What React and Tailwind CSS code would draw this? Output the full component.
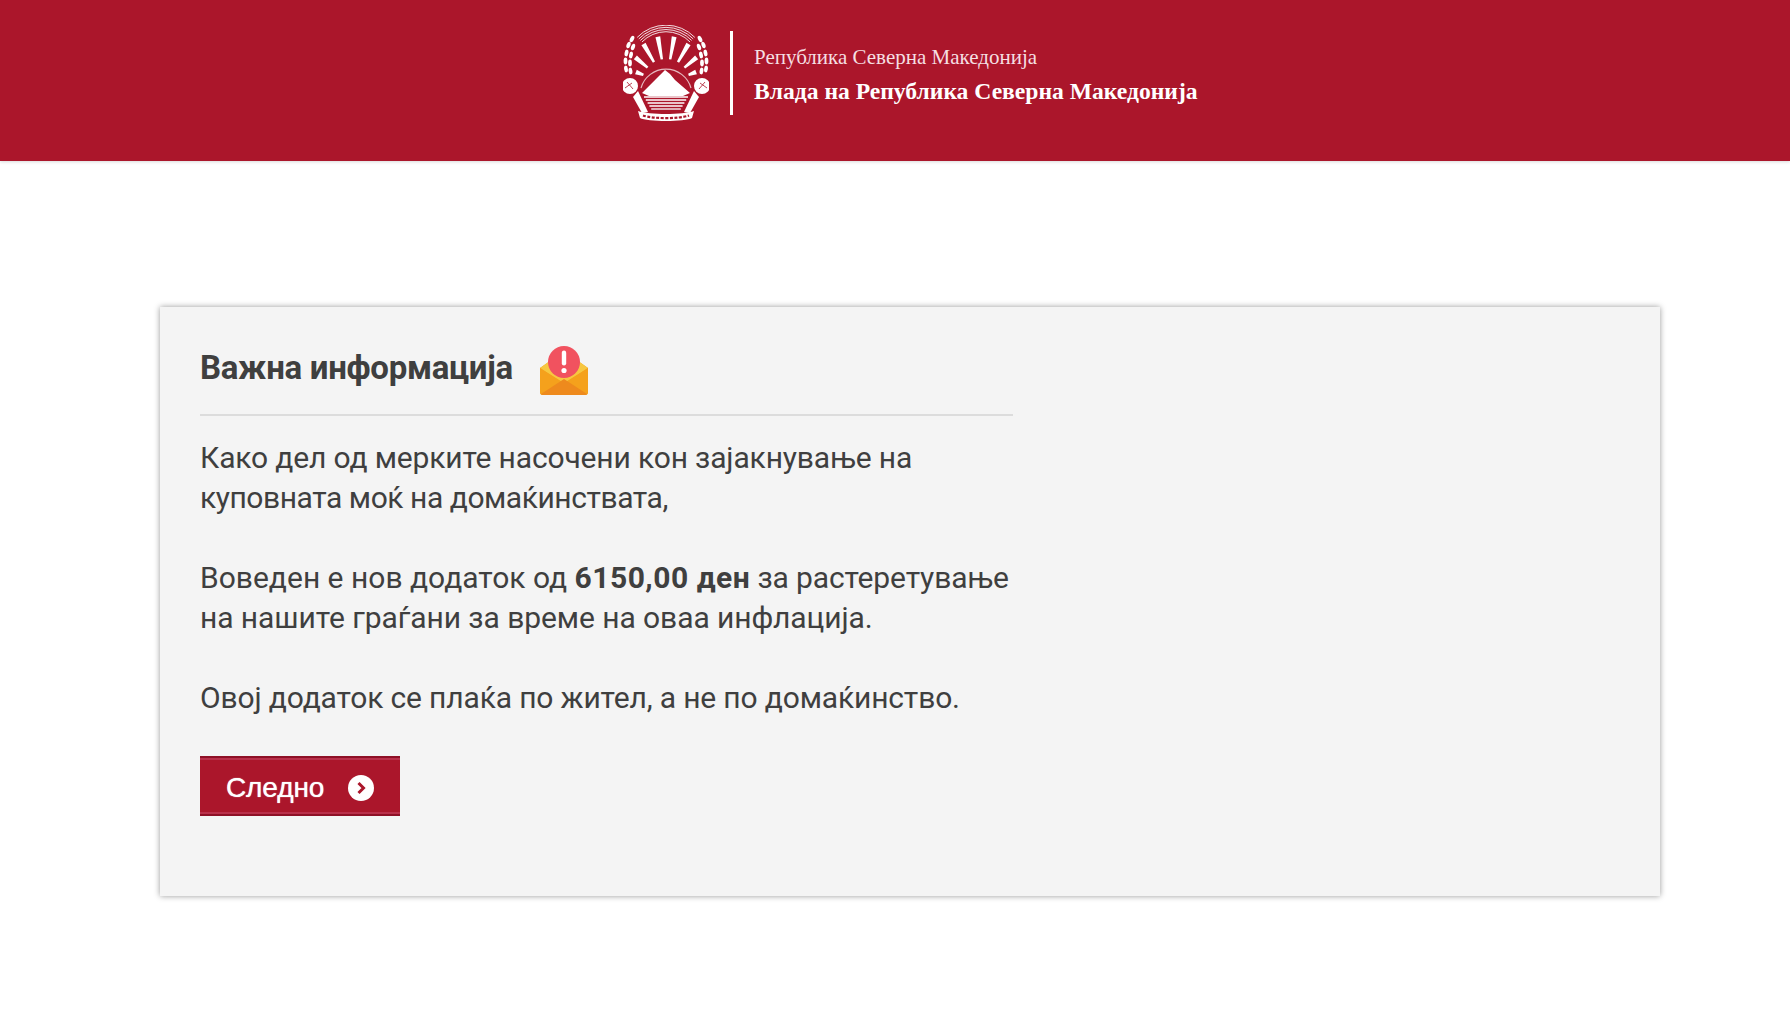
const rays = [
  [-70, 32], [-50, 40], [-30, 45], [-10, 47], [10, 47], [30, 45], [50, 40], [70, 32],
];

function Wheat({ flip }) {
  const grains = [
    [9, 14, 28], [5.5, 20, 20], [10, 22, 20], [3.5, 28, 10], [8, 30, 10], [2.5, 36, 0], [7, 38, 0], [3, 44, -8], [7.5, 46, -8],
  ];
  return (
    <g transform={flip ? "matrix(-1 0 0 1 86 0)" : undefined}>
      {grains.map(([x, y, a]) => (
        <ellipse key={`${x}-${y}`} cx={x} cy={y} rx="1.9" ry="3.4" fill="#fff" transform={`rotate(${a} ${x} ${y})`} />
      ))}
    </g>
  );
}

function Emblem() {
  return (
    <svg width="86" height="97" viewBox="0 0 86 97" fill="none" className="shrink-0 blur-[0.4px]">
      {[40, 37.8, 35.6, 33.4].map((r) => (
        <path key={r} d={`M${43 - r * 0.72} ${40 - r * 0.69} A${r} ${r} 0 0 1 ${43 + r * 0.72} ${40 - r * 0.69}`} stroke="#fff" strokeWidth="1" opacity="0.85" />
      ))}
      {rays.map(([a, R]) => (
        <path key={a} d={`M41.8 34 L40.6 ${58 - R} L45.4 ${58 - R} L44.2 34 Z`} fill="#fff" transform={`rotate(${a} 43 58)`} />
      ))}
      <path d="M18 63 A26 26 0 0 1 68 63" stroke="#fff" strokeWidth="1.2" opacity="0.7" />
      <path d="M19 68 L33 54 L37 50 L42 45 L47 49 L52 55 L67 68 L60 71 L26 71 Z" fill="#fff" />
      {[72, 75, 78, 81, 84].map((y) => (
        <line key={y} x1={21 + (y - 72) * 0.6} y1={y} x2={65 - (y - 72) * 0.6} y2={y} stroke="#fff" strokeWidth="1.3" />
      ))}
      <Wheat />
      <Wheat flip />
      <circle cx="7" cy="61" r="8" fill="#fff" />
      <circle cx="79" cy="61" r="8" fill="#fff" />
      <path d="M4 57 L10 64 M2 63 L9 58" stroke="#ab162b" strokeWidth="0.8" />
      <path d="M82 57 L76 64 M84 63 L77 58" stroke="#ab162b" strokeWidth="0.8" />
      <path d="M15 66 L25 87 L19 88 L10 72 Z" fill="#fff" />
      <path d="M71 66 L61 87 L67 88 L76 72 Z" fill="#fff" />
      <path d="M15 86 C26 90 60 90 71 86 L69 93 C62 97 24 97 17 93 Z" fill="#fff" />
      <path d="M20 90.5 C30 94 56 94 66 90.5" stroke="#ab162b" strokeWidth="2.2" strokeDasharray="3 1.5" />
    </svg>
  );
}

function MailAlert() {
  return (
    <svg width="50" height="50" viewBox="0 0 50 50" className="shrink-0">
      <path d="M1 22 L25 5 L49 22 L49 46 Q49 49 46 49 L4 49 Q1 49 1 46 Z" fill="#f5a11c" />
      <path d="M1 22 L25 5 L49 22 L25 38 Z" fill="#f7c741" />
      <path d="M1 22 L25 37 L49 22 L49 46 Q49 49 46 49 L4 49 Q1 49 1 46 Z" fill="#f5a11c" />
      <path d="M2 48 L25 33 L48 48 Q47 49 46 49 L4 49 Q3 49 2 48 Z" fill="#ee8a1d" />
      <circle cx="25" cy="16" r="16" fill="#f1525f" />
      <rect x="22.8" y="4.5" width="4.4" height="15" rx="2.2" fill="#fff" />
      <circle cx="25" cy="24.5" r="2.6" fill="#fff" />
    </svg>
  );
}

export default function App() {
  const body = "font-['Roboto','Noto_Sans',sans-serif]";
  return (
    <div className="min-h-[1020px] bg-white">
      <header className="flex h-[161px] items-start bg-[#ab162b] pl-[623px] pt-[25px] shadow-[0_1px_3px_rgba(0,0,0,0.15)]">
        <Emblem />
        <div className="ml-[21px] mt-[6px] h-[84px] w-[3px] bg-white" />
        <div className="ml-[21px] mt-[19px] font-['Liberation_Serif',serif] text-white">
          <div className="text-[21px] leading-[26px] text-[#f5dfe2]">Република Северна Македонија</div>
          <div className="mt-[7px] text-[23.6px] font-bold leading-[28px]">Влада на Република Северна Македонија</div>
        </div>
      </header>
      <main className="pl-[160px] pt-[146px]">
        <section className={`h-[589px] w-[1500px] bg-[#f4f4f4] px-[40px] pt-[33px] text-[#3f3f3f] shadow-[0_0_6px_rgba(0,0,0,0.4)] ${body}`}>
          <div className="w-[813px] border-b-2 border-[#dcdcdc]">
            <div className="flex h-[74px] items-start">
              <h1 className="mt-[6px] text-[33px] font-bold leading-[44px] tracking-[-0.3px] text-[#3f3f3f]">Важна информација</h1>
              <div className="ml-[26px] mt-[6px]"><MailAlert /></div>
            </div>
          </div>
          <div className="mt-[22px] w-[830px] text-[30px] leading-[40px] tracking-[-0.15px]">
            <p>Како дел од мерките насочени кон зајакнување на<br /><span className="tracking-[-0.45px]">куповната моќ на домаќинствата,</span></p>
            <p className="mt-[40px]"><span className="tracking-[0px]">Воведен е нов додаток од </span><b className="tracking-[0.5px]">6150,00 ден</b> за растеретување<br /><span className="tracking-[-0.07px]">на нашите граѓани за време на оваа инфлација.</span></p>
            <p className="mt-[40px]">Овој додаток се плаќа по жител, а не по домаќинство.</p>
          </div>
          <button className="mt-[38px] flex h-[60px] w-[200px] items-center border-y-2 border-[#8e1026] bg-[#ab162b] pl-[26px] pt-[3px] font-['Liberation_Sans',sans-serif] text-[28px] tracking-[-0.1px] text-white shadow-[inset_0_2px_0_#b9304a,inset_0_-2px_0_#b9304a] [text-shadow:0_0_1px_#fff]">
            Следно
            <span className="ml-[24px] flex h-[26px] w-[26px] items-center justify-center rounded-full bg-white">
              <svg width="12" height="14" viewBox="0 0 12 14" fill="none"><path d="M3.5 2 L8.5 7 L3.5 12" stroke="#ab162b" strokeWidth="3" /></svg>
            </span>
          </button>
        </section>
      </main>
    </div>
  );
}
